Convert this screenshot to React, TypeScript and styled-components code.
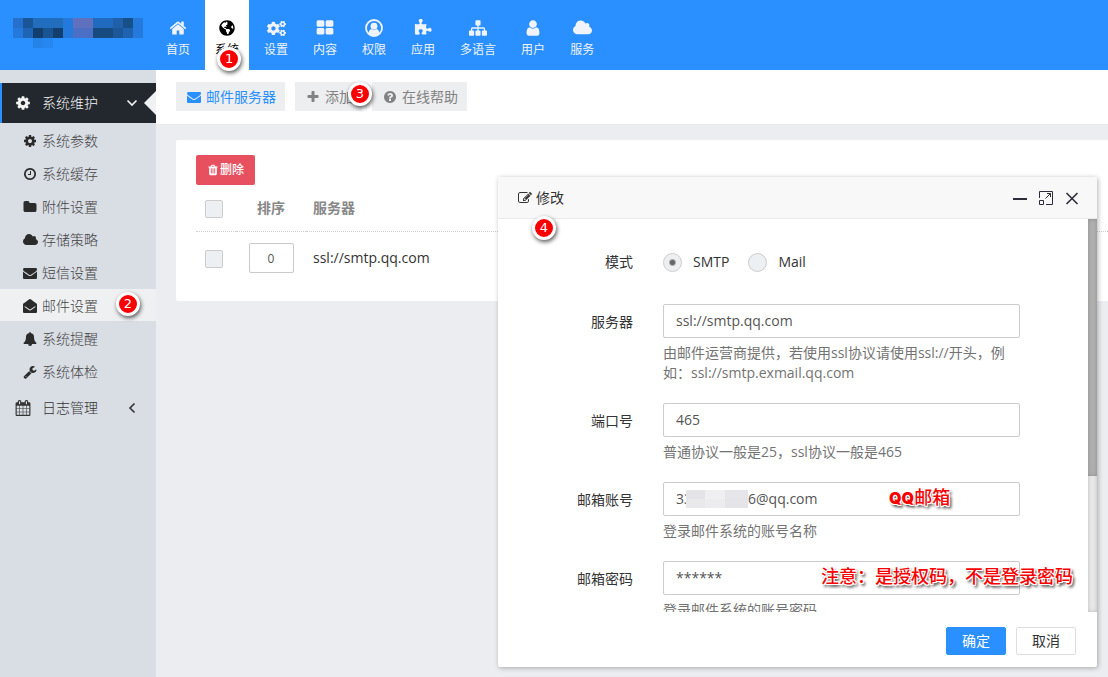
import React from 'react';
import styled, { createGlobalStyle, css } from 'styled-components';
import { FaCogs, FaEnvelopeOpen, FaGlobeAmericas } from 'react-icons/fa';

const GlobalStyle = createGlobalStyle`
  *, *::before, *::after { box-sizing: border-box; }
  html, body { margin: 0; }
  body {
    background: #ecedf0;
    color: #333;
    font: 14px/20px "Open Sans", "Noto Sans CJK SC", sans-serif;
    overflow: hidden;
  }
  a { color: inherit; text-decoration: none; }
  button, input { font: inherit; color: inherit; }
  button { border: 0; padding: 0; background: none; cursor: pointer; }
  ul { margin: 0; padding: 0; list-style: none; }
`;

const DISC =
  'm384 192q0 209-103 385.5t-279.5 279.5-385.5 103-385.5-103-279.5-279.5-103-385.5 103-385.5 279.5-279.5 385.5-103 385.5 103 279.5 279.5 103 385.5z';

const PATHS = {
  home: 'M1472 992v480q0 26-19 45t-45 19h-384v-384h-256v384h-384q-26 0-45-19t-19-45v-480q0-1 .5-3t.5-3l575-474 575 474q1 2 1 6zm223-69l-62 74q-8 9-21 11h-3q-13 0-21-7l-692-577-692 577q-12 8-24 7-13-2-21-11l-62-74q-8-10-7-23.5t11-21.5l719-599q32-26 76-26t76 26l244 204v-195q0-14 9-23t23-9h192q14 0 23 9t9 23v408l219 182q10 8 11 21.5t-7 23.5z',
  envelope:
    'M1792 710v794q0 66-47 113t-113 47h-1472q-66 0-113-47t-47-113v-794q44 49 101 87 362 246 497 345 57 42 92.5 65.5t94.5 48 110 24.5h2q51 0 110-24.5t94.5-48 92.5-65.5q170-123 498-345 57-39 100-87zm0-294q0 79-49 151t-122 123q-376 261-468 325-10 7-42.5 31t-54 38.5-52 32.5-57.5 27-50 9h-2q-23 0-50-9t-57.5-27-52-32.5-54-38.5-42.5-31q-91-64-262-182.5t-205-142.5q-62-42-117-115.5t-55-136.5q0-78 41.5-130t118.5-52h1472q65 0 112.5 47t47.5 113z',
  cog: 'M1152 896q0-106-75-181t-181-75-181 75-75 181 75 181 181 75 181-75 75-181zm512-109v222q0 12-8 23t-20 13l-185 28q-19 54-39 91 35 50 107 138 10 12 10 25t-9 23q-27 37-99 108t-94 71q-12 0-26-9l-138-108q-44 23-91 38-16 136-29 186-7 28-36 28h-222q-14 0-24.5-8.5t-11.5-21.5l-28-184q-49-16-90-37l-141 107q-10 9-25 9-14 0-25-11-126-114-165-168-7-10-7-23 0-12 8-23 15-21 51-66.5t54-70.5q-27-50-41-99l-183-27q-13-2-21-12.5t-8-23.5v-222q0-12 8-23t19-13l186-28q14-46 39-92-40-57-107-138-10-12-10-24 0-10 9-23 26-36 98.5-107.5t94.5-71.5q13 0 26 10l138 107q44-23 91-38 16-136 29-186 7-28 36-28h222q14 0 24.5 8.5t11.5 21.5l28 184q49 16 90 37l142-107q9-9 24-9 13 0 25 10 129 119 165 170 7 8 7 22 0 12-8 23-15 21-51 66.5t-54 70.5q26 50 41 98l183 28q13 2 21 12.5t8 23.5z',
  plus: 'M1600 736v192q0 40-28 68t-68 28h-416v416q0 40-28 68t-68 28h-192q-40 0-68-28t-28-68v-416h-416q-40 0-68-28t-28-68v-192q0-40 28-68t68-28h416v-416q0-40 28-68t68-28h192q40 0 68 28t28 68v416h416q40 0 68 28t28 68z',
  clock: 'M1024 544v448q0 14-9 23t-23 9h-320q-14 0-23-9t-9-23v-64q0-14 9-23t23-9h224v-352q0-14 9-23t23-9h64q14 0 23 9t9 23zm416 352q0-148-73-273t-198-198-273-73-273 73-198 198-73 273 73 273 198 198 273 73 273-73 198-198 73-273zm224 0q0 209-103 385.5t-279.5 279.5-385.5 103-385.5-103-279.5-279.5-103-385.5 103-385.5 279.5-279.5 385.5-103 385.5 103 279.5 279.5 103 385.5z',
  folder:
    'M1728 608v704q0 92-66 158t-158 66h-1216q-92 0-158-66t-66-158v-960q0-92 66-158t158-66h320q92 0 158 66t66 158v32h672q92 0 158 66t66 158z',
  cloud: 'M1920 1152q0 159-112.5 271.5t-271.5 112.5h-1088q-185 0-316.5-131.5t-131.5-316.5q0-132 71-241.5t187-163.5q-2-28-2-43 0-212 150-362t362-150q158 0 286.5 88t187.5 230q70-62 166-62 106 0 181 75t75 181q0 75-41 138 129 30 213 134.5t84 239.5z',
  help:
    'M1024 1376v-192q0-14-9-23t-23-9h-192q-14 0-23 9t-9 23v192q0 14 9 23t23 9h192q14 0 23-9t9-23zm256-672q0-88-55.5-163t-138.5-116-170-41q-243 0-371 213-15 24 8 42l132 100q7 6 19 6 16 0 25-12 53-68 86-92 34-24 86-24 48 0 85.5 26t37.5 59q0 38-20 61t-68 45q-63 28-115.5 86.5t-52.5 125.5v36q0 14 9 23t23 9h192q14 0 23-9t9-23q0-19 21.5-49.5t54.5-49.5q32-18 49-28.5t46-35 44.5-48 28-60.5 12.5-81z' + DISC,
  user: 'M1536 1399q0 109-62.5 187t-150.5 78h-854q-88 0-150.5-78t-62.5-187q0-85 8.5-160.5t31.5-152 58.5-131 94-89 134.5-34.5q131 128 313 128t313-128q76 0 134.5 34.5t94 89 58.5 131 31.5 152 8.5 160.5zm-256-887q0 159-112.5 271.5t-271.5 112.5-271.5-112.5-112.5-271.5 112.5-271.5 271.5-112.5 271.5 112.5 112.5 271.5z',
  trash:
    'M704 1376v-704q0-14-9-23t-23-9h-64q-14 0-23 9t-9 23v704q0 14 9 23t23 9h64q14 0 23-9t9-23zm256 0v-704q0-14-9-23t-23-9h-64q-14 0-23 9t-9 23v704q0 14 9 23t23 9h64q14 0 23-9t9-23zm256 0v-704q0-14-9-23t-23-9h-64q-14 0-23 9t-9 23v704q0 14 9 23t23 9h64q14 0 23-9t9-23zm-544-992h448l-48-117q-7-9-17-11h-317q-10 2-17 11zm928 32v64q0 14-9 23t-23 9h-96v948q0 83-47 143.5t-113 60.5h-832q-66 0-113-58.5t-47-141.5v-952h-96q-14 0-23-9t-9-23v-64q0-14 9-23t23-9h309l70-167q15-37 54-63t79-26h320q40 0 79 26t54 63l70 167h309q14 0 23 9t9 23z',
  edit: 'M888 1184l116-116-152-152-116 116v56h96v96h56zm440-720q-16-16-33 1l-350 350q-17 17-1 33t33-1l350-350q17-17 1-33zm80 594v190q0 119-84.5 203.5t-203.5 84.5h-832q-119 0-203.5-84.5t-84.5-203.5v-832q0-119 84.5-203.5t203.5-84.5h832q63 0 117 25 15 7 18 23 3 17-9 29l-49 49q-14 14-32 8-23-6-45-6h-832q-66 0-113 47t-47 113v832q0 66 47 113t113 47h832q66 0 113-47t47-113v-126q0-13 9-22l64-64q15-15 35-7t20 29zm-96-738l288 288-672 672h-288v-288zm444 132l-92 92-288-288 92-92q28-28 68-28t68 28l152 152q28 28 28 68t-28 68z',
  wrench:
    'M448 1472q0-26-19-45t-45-19-45 19-19 45 19 45 45 19 45-19 19-45zm644-420l-682 682q-37 37-90 37-52 0-91-37l-106-108q-38-36-38-90 0-53 38-91l681-681q39 98 114.5 173.5t173.5 114.5zm634-435q0 39-23 106-47 134-164.5 217.5t-258.5 83.5q-185 0-316.5-131.5t-131.5-316.5 131.5-316.5 316.5-131.5q58 0 121.5 16.5t107.5 46.5q16 11 16 28t-16 28l-293 169v224l193 107q5-3 79-48.5t135.5-81 70.5-35.5q15 0 23.5 10t8.5 25z',
  bell: 'M912 1696q0-16-16-16-59 0-101.5-42.5t-42.5-101.5q0-16-16-16t-16 16q0 73 51.5 124.5t124.5 51.5q16 0 16-16zm816-288q0 52-38 90t-90 38h-448q0 106-75 181t-181 75-181-75-75-181h-448q-52 0-90-38t-38-90q50-42 91-88t85-119.5 74.5-158.5 50-206 19.5-260q0-152 117-282.5t307-158.5q-8-19-8-39 0-40 28-68t68-28 68 28 28 68q0 20-8 39 190 28 307 158.5t117 282.5q0 139 19.5 260t50 206 74.5 158.5 85 119.5 91 88z',
  grid: 'M832 1024v384q0 52-38 90t-90 38h-512q-52 0-90-38t-38-90v-384q0-52 38-90t90-38h512q52 0 90 38t38 90zm0-768v384q0 52-38 90t-90 38h-512q-52 0-90-38t-38-90v-384q0-52 38-90t90-38h512q52 0 90 38t38 90zm896 768v384q0 52-38 90t-90 38h-512q-52 0-90-38t-38-90v-384q0-52 38-90t90-38h512q52 0 90 38t38 90zm0-768v384q0 52-38 90t-90 38h-512q-52 0-90-38t-38-90v-384q0-52 38-90t90-38h512q52 0 90 38t38 90z',
  calendar:
    'M192 1664h288v-288h-288v288zm352 0h320v-288h-320v288zm-352-352h288v-320h-288v320zm352 0h320v-320h-320v320zm-352-384h288v-288h-288v288zm736 736h320v-288h-320v288zm-384-736h320v-288h-320v288zm768 736h288v-288h-288v288zm-384-352h320v-320h-320v320zm-352-864v-288q0-13-9.5-22.5t-22.5-9.5h-64q-13 0-22.5 9.5t-9.5 22.5v288q0 13 9.5 22.5t22.5 9.5h64q13 0 22.5-9.5t9.5-22.5zm736 864h288v-320h-288v320zm-384-384h320v-288h-320v288zm384 0h288v-288h-288v288zm32-480v-288q0-13-9.5-22.5t-22.5-9.5h-64q-13 0-22.5 9.5t-9.5 22.5v288q0 13 9.5 22.5t22.5 9.5h64q13 0 22.5-9.5t9.5-22.5zm384-64v1280q0 52-38 90t-90 38h-1408q-52 0-90-38t-38-90v-1280q0-52 38-90t90-38h128v-96q0-66 47-113t113-47h64q66 0 113 47t47 113v96h384v-96q0-66 47-113t113-47h64q66 0 113 47t47 113v96h128q52 0 90 38t38 90z',
  puzzle:
    'M1755 1083q0 81-44.5 135t-123.5 54q-41 0-77.5-17.5t-59-38-56.5-38-71-17.5q-110 0-110 124 0 39 16 115t15 115v5q-22 0-33 1-34 3-97.5 11.5t-115.5 13.5-98 5q-61 0-103-26.5t-42-83.5q0-37 17.5-71t38-56.5 38-59 17.5-77.5q0-79-54-123.5t-135-44.5q-84 0-143 45.5t-59 127.5q0 43 15 83t33.5 64.5 33.5 53 15 50.5q0 45-46 89-37 35-117 35-95 0-245-24-9-2-27.5-4t-27.5-4l-13-2q-1 0-3-1-2 0-2-1v-1024q2 1 17.5 3.5t34 5 21.5 3.5q150 24 245 24 80 0 117-35 46-44 46-89 0-22-15-50.5t-33.5-53-33.5-64.5-15-83q0-82 59-127.5t144-45.5q80 0 134 44.5t54 123.5q0 41-17.5 77.5t-38 59-38 56.5-17.5 71q0 57 42 83.5t103 26.5q64 0 180-15t163-17v2q-1 2-3.5 17.5t-5 34-3.5 21.5q-24 150-24 245 0 80 35 117 44 46 89 46 22 0 50.5-15t53-33.5 64.5-33.5 83-15q82 0 127.5 59t45.5 143z',
  sitemap:
    'M1792 1248v320q0 40-28 68t-68 28h-320q-40 0-68-28t-28-68v-320q0-40 28-68t68-28h96v-192h-512v192h96q40 0 68 28t28 68v320q0 40-28 68t-68 28h-320q-40 0-68-28t-28-68v-320q0-40 28-68t68-28h96v-192h-512v192h96q40 0 68 28t28 68v320q0 40-28 68t-68 28h-320q-40 0-68-28t-28-68v-320q0-40 28-68t68-28h96v-192q0-52 38-90t90-38h512v-192h-96q-40 0-68-28t-28-68v-320q0-40 28-68t68-28h320q40 0 68 28t28 68v320q0 40-28 68t-68 28h-96v192h512q52 0 90 38t38 90v192h96q40 0 68 28t28 68z',
};

type IconName = keyof typeof PATHS;

function Icon({ name, size }: { name: IconName; size: number }) {
  const wide = name === 'cloud';
  return (
    <svg
      width={wide ? Math.round((size * 15) / 14) : size}
      height={size}
      viewBox={wide ? '0 0 1920 1792' : '0 0 1792 1792'}
      fill="currentColor"
      aria-hidden="true"
    >
      <path d={PATHS[name]} />
    </svg>
  );
}

function UserCircle() {
  return (
    <svg width="18" height="18" viewBox="0 0 18 18" fill="none" aria-hidden="true">
      <circle cx="9" cy="9" r="8" stroke="currentColor" strokeWidth="1.8" />
      <circle cx="9" cy="7.2" r="3.4" fill="currentColor" />
      <path d="M3.4 14.6c.3-2.8 1.500-4.200 3-4.600 1.600 1.200 3.600 1.200 5.200 0 1.500.4 2.700 1.800 3 4.600-3 3-8.200 3-11.200 0z" fill="currentColor" />
    </svg>
  );
}

function Chevron({ dir }: { dir: 'down' | 'left' }) {
  return (
    <svg width="12" height="12" viewBox="0 0 12 12" fill="none" stroke="currentColor" strokeWidth="1.6" aria-hidden="true">
      <path d={dir === 'down' ? 'M1.500 3.500L6 8l4.500-4.500' : 'M8.500 1.500L4 6l4.500 4.500'} />
    </svg>
  );
}

/* ---------- header ---------- */

const Header = styled.header`
  display: flex;
  height: 70px;
  background: #2a90ff;
  color: #f0f3fa;
`;

const Brand = styled.a`
  flex: none;
  width: 156px;
  padding: 18px 0 0 13px;
`;

const TopNav = styled.nav`
  display: flex;
  gap: 5px;
`;

const TopLink = styled.a<{ $active?: boolean }>`
  position: relative;
  display: flex;
  flex-direction: column;
  align-items: center;
  padding: 18px 10px 0;
  font-size: 12px;
  line-height: 24px;
  background: ${p => (p.$active ? '#fff' : 'transparent')};
  color: ${p => (p.$active ? '#000' : 'inherit')};
`;

const TopIcon = styled.span`
  display: flex;
  align-items: center;
  justify-content: center;
  height: 20px;
`;

const Badge = styled.span<{ $x: number; $y: number }>`
  position: absolute;
  left: ${p => p.$x}px;
  top: ${p => p.$y}px;
  z-index: 2;
  width: 24px;
  height: 24px;
  border: 3px solid #fff;
  border-radius: 50%;
  background: #f80000;
  box-shadow: 1px 2px 4px rgba(0, 0, 0, 0.65);
  color: #fff;
  font: 13px/18px "DejaVu Sans", sans-serif;
  text-align: center;
`;

const LOGO_ROWS = [
  ['#2470cc', '#1a5599', '#236dbd', '#216dc0', '#236dbd', '#2479dd', '#5f70bd', '#5f70bd', '#206bbf', '#206bbf', '#1f60a8', '#174f88', '#2479dd'],
  ['#2479dd', '#1f65b5', '#133f70', '#1b5492', '#133f70', '#2479dd', '#4a6fc4', '#4a6fc4', '#174b80', '#174b80', '#1b5799', '#1e62b0', '#2479dd'],
  ['', '', '#2582e6', '#2787f0', '', '', '', '', '', '', '', '', ''],
];

function LogoMosaic() {
  return (
    <svg width="130" height="30" viewBox="0 0 130 30" shapeRendering="crispEdges" role="img" aria-label="logo">
      {LOGO_ROWS.map((row, y) =>
        row.map((c, x) => (c ? <rect key={`${x}-${y}`} x={x * 10} y={y * 10} width="10" height="10" fill={c} /> : null)),
      )}
    </svg>
  );
}

/* ---------- sidebar ---------- */

const Shell = styled.div`
  display: flex;
  min-height: calc(100vh - 70px);
`;

const Sidebar = styled.aside`
  flex: none;
  width: 156px;
  padding-top: 13px;
  background: #d9dde4;
  font-weight: 300;
`;

const Group = styled.button<{ $open?: boolean }>`
  position: relative;
  display: flex;
  align-items: center;
  width: 100%;
  height: 40px;
  padding: 0 18px 0 13px;
  border-left: 2px solid transparent;
  color: #333;
  ${p =>
    p.$open &&
    css`
      border-left-color: #2a90ff;
      background: #22282e;
      color: #f4f4f4;
      &::after {
        content: '';
        position: absolute;
        right: 0;
        top: 8px;
        border: solid transparent;
        border-width: 12px 12px 12px 0;
        border-right-color: #f0f1f3;
      }
    `}
`;

const GroupIcon = styled.span`
  display: flex;
  width: 27px;
`;

const GroupLabel = styled.span`
  flex: 1;
  text-align: left;
`;

const SubMenu = styled.ul`
  display: grid;
  gap: 1px;
  padding: 1px 0;
`;

const SubLink = styled.a<{ $active?: boolean }>`
  position: relative;
  display: flex;
  align-items: center;
  height: 32px;
  padding: 2px 0 0 22px;
  background: ${p => (p.$active ? '#eff0f1' : 'transparent')};
  color: #444;
`;

const SubIcon = styled.span`
  display: flex;
  justify-content: center;
  width: 16px;
  margin-right: 4px;
  color: #2b2b2b;
`;

/* ---------- main ---------- */

const Main = styled.main`
  flex: 1;
  min-width: 0;
`;

const Toolbar = styled.div`
  display: flex;
  gap: 10px;
  padding: 12px 20px 13px;
  border-bottom: 1px solid #e8e9eb;
  background: #fff;
`;

const Tab = styled.a<{ $active?: boolean }>`
  position: relative;
  display: flex;
  align-items: center;
  gap: 5px;
  height: 29px;
  padding: 0 9px 0 11px;
  background: #edeef0;
  color: ${p => (p.$active ? '#2a90ff' : '#828282')};
`;

const Card = styled.section`
  margin: 15px 0 0 20px;
  padding: 15px 0 16px 20px;
  border-radius: 2px 0 0 2px;
  background: #fff;
`;

const DeleteButton = styled.button`
  display: flex;
  align-items: center;
  gap: 1px;
  height: 30px;
  padding: 0 11px;
  border-radius: 2px;
  background: #e7505f;
  color: #fff;
  font-size: 12px;
  font-weight: 500;
`;

const Table = styled.table`
  width: 100%;
  border-collapse: collapse;
  table-layout: fixed;

  th, td { padding: 0; text-align: left; }
  th { height: 46px; border-bottom: 1px dotted #ccced0; color: #888; font-weight: 700; }
  td { height: 54px; }
  th:nth-child(1) { width: 40px; }
  th:nth-child(2) { width: 70px; }
  tr > :nth-child(1) { padding: 2px 0 0 9px; }
  tr > :nth-child(2) { text-align: center; }
  tr > :nth-child(3) { padding-left: 7px; }
`;

const Check = styled.input.attrs({ type: 'checkbox' })`
  appearance: none;
  display: block;
  width: 18px;
  height: 18px;
  margin: 0;
  border: 1px solid #ccc;
  border-radius: 2px;
  background: #edf0f3;
`;

const OrderInput = styled.input`
  width: 45px;
  height: 30px;
  padding: 0;
  border: 1px solid #c8cacd;
  border-radius: 2px;
  background: #fff;
  color: #555;
  font-size: 12px;
  text-align: center;
`;

/* ---------- dialog ---------- */

const Dialog = styled.div`
  position: absolute;
  top: 177px;
  right: 11px;
  display: flex;
  flex-direction: column;
  width: 599px;
  height: 490px;
  border-radius: 2px;
  background: #fff;
  box-shadow: 1px 1px 5px rgba(0, 0, 0, 0.3);
`;

const DialogHead = styled.div`
  display: flex;
  align-items: center;
  height: 42px;
  padding: 0 17px 0 20px;
  border-bottom: 1px solid #eaeaea;
  background: #f8f8f8;
`;

const DialogTitle = styled.h2`
  display: flex;
  flex: 1;
  align-items: center;
  gap: 4px;
  margin: 0;
  font-size: 14px;
  font-weight: 400;
`;

const WindowButtons = styled.div`
  display: flex;
  gap: 10px;
  color: #2d2c3b;
  button { display: flex; width: 16px; height: 16px; }
`;

const DialogMain = styled.div`
  display: flex;
  flex: 1;
  min-height: 0;
`;

const Form = styled.form`
  flex: 1;
  padding: 26px 68px 0 0;
  overflow: hidden;
`;

const ScrollTrack = styled.div`
  width: 9px;
  background: #e9e9e9;
  box-shadow: inset 0 0 4px rgba(0, 0, 0, 0.2);
`;

const ScrollThumb = styled.div`
  height: 257px;
  background: #b0b0b0;
  box-shadow: inset 0 0 4px rgba(0, 0, 0, 0.2);
`;

const FormRow = styled.div`
  display: flex;
  gap: 30px;
  margin-bottom: 20px;
`;

const rowLabel = css`
  flex: none;
  width: 135px;
  text-align: right;
`;

const Label = styled.label`
  ${rowLabel}
  line-height: 36px;
`;

const LabelText = styled.span`
  ${rowLabel}
  line-height: 34px;
`;

const Field = styled.div`
  flex: 1;
  min-width: 0;
`;

const Control = styled.div`
  position: relative;
  display: flex;
`;

const TextInput = styled.input`
  flex: 1;
  min-width: 0;
  height: 34px;
  padding: 0 12px 2px;
  border: 1px solid #ccc;
  border-radius: 2px;
  background: #fff;
  color: #555;
`;

const Help = styled.p`
  margin: 5px 0 0;
  color: #737373;
`;

const Radios = styled.div`
  display: flex;
  gap: 19px;
  height: 39px;
  padding-bottom: 5px;
`;

const RadioLabel = styled.label`
  display: flex;
  align-items: center;
  gap: 11px;
`;

const Radio = styled.input.attrs({ type: 'radio' })`
  appearance: none;
  width: 19px;
  height: 19px;
  margin: 0;
  border: 1px solid #ccc;
  border-radius: 50%;
  background: #edf0f3;
  &:checked { background: radial-gradient(circle, #666 0 2px, #edf0f3 4px); }
`;

const Redaction = styled.svg`
  position: absolute;
  left: 23px;
  top: 8px;
`;

const Note = styled.span<{ $x: number; $y: number }>`
  position: absolute;
  left: ${p => p.$x}px;
  top: ${p => p.$y}px;
  z-index: 2;
  color: #f80000;
  font: 500 18px/20px "Noto Sans CJK SC", sans-serif;
  white-space: nowrap;
  text-shadow: -1px -1px 0 #fff, 1px -1px 0 #fff, -1px 1px 0 #fff, 1px 1px 0 #fff, 0 -1px 0 #fff, 0 1px 0 #fff,
    2px 2px 3px #444, 2px 3px 3px #888;
`;

const NoteLatin = styled.b`
  font: 900 16px/20px Inter, sans-serif;
`;

const DialogFoot = styled.div`
  display: flex;
  justify-content: flex-end;
  gap: 10px;
  padding: 15px 21px 12px;
`;

const FootButton = styled.button<{ $primary?: boolean }>`
  width: 60px;
  height: 28px;
  border: 1px solid ${p => (p.$primary ? '#2a90ff' : '#dedede')};
  border-radius: 2px;
  background: ${p => (p.$primary ? '#2a90ff' : '#fff')};
  color: ${p => (p.$primary ? '#fff' : '#333')};
`;

const NAV: { label: string; icon: React.ReactNode; active?: boolean }[] = [
  { label: '首页', icon: <Icon name="home" size={18} /> },
  { label: '系统', icon: <FaGlobeAmericas size={16} />, active: true },
  { label: '设置', icon: <FaCogs size={19} /> },
  { label: '内容', icon: <Icon name="grid" size={18} /> },
  { label: '权限', icon: <UserCircle /> },
  { label: '应用', icon: <Icon name="puzzle" size={18} /> },
  { label: '多语言', icon: <Icon name="sitemap" size={18} /> },
  { label: '用户', icon: <Icon name="user" size={18} /> },
  { label: '服务', icon: <Icon name="cloud" size={18} /> },
];

const MENU: { label: string; icon: React.ReactNode; active?: boolean }[] = [
  { label: '系统参数', icon: <Icon name="cog" size={14} /> },
  { label: '系统缓存', icon: <Icon name="clock" size={14} /> },
  { label: '附件设置', icon: <Icon name="folder" size={14} /> },
  { label: '存储策略', icon: <Icon name="cloud" size={14} /> },
  { label: '短信设置', icon: <Icon name="envelope" size={14} /> },
  { label: '邮件设置', icon: <FaEnvelopeOpen size={14} />, active: true },
  { label: '系统提醒', icon: <Icon name="bell" size={14} /> },
  { label: '系统体检', icon: <Icon name="wrench" size={14} /> },
];

const REDACTION_CELLS = [
  [0, 0, '#e3e3e8'], [19, 0, '#efeff2'], [39, 0, '#e6e6ea'], [0, 9, '#e9e9ec'], [19, 9, '#ececef'], [39, 9, '#e4e4e9'],
] as const;

const FIGURE_SPACES = '\u2007'.repeat(7);

export default function App() {
  return (
    <>
      <GlobalStyle />
      <Header>
        <Brand href="#"><LogoMosaic /></Brand>
        <TopNav>
          {NAV.map(item => (
            <TopLink key={item.label} href="#" $active={item.active}>
              <TopIcon>{item.icon}</TopIcon>
              {item.label}
              {item.active && <Badge $x={12} $y={47}>1</Badge>}
            </TopLink>
          ))}
        </TopNav>
      </Header>
      <Shell>
        <Sidebar>
          <Group type="button" $open>
            <GroupIcon><Icon name="cog" size={16} /></GroupIcon>
            <GroupLabel>系统维护</GroupLabel>
            <Chevron dir="down" />
          </Group>
          <SubMenu>
            {MENU.map(item => (
              <li key={item.label}>
                <SubLink href="#" $active={item.active}>
                  <SubIcon>{item.icon}</SubIcon>
                  {item.label}
                  {item.active && <Badge $x={116} $y={3}>2</Badge>}
                </SubLink>
              </li>
            ))}
          </SubMenu>
          <Group type="button">
            <GroupIcon><Icon name="calendar" size={16} /></GroupIcon>
            <GroupLabel>日志管理</GroupLabel>
            <Chevron dir="left" />
          </Group>
        </Sidebar>
        <Main>
          <Toolbar>
            <Tab href="#" $active><Icon name="envelope" size={14} />邮件服务器</Tab>
            <Tab href="#"><Icon name="plus" size={14} />添加<Badge $x={53} $y={0}>3</Badge></Tab>
            <Tab href="#"><Icon name="help" size={14} />在线帮助</Tab>
          </Toolbar>
          <Card>
            <DeleteButton type="button"><Icon name="trash" size={12} />删除</DeleteButton>
            <Table>
              <thead>
                <tr>
                  <th><Check aria-label="全选" /></th>
                  <th>排序</th>
                  <th>服务器</th>
                </tr>
              </thead>
              <tbody>
                <tr>
                  <td><Check aria-label="选择" /></td>
                  <td><OrderInput defaultValue="0" aria-label="排序" /></td>
                  <td>ssl://smtp.qq.com</td>
                </tr>
              </tbody>
            </Table>
          </Card>
        </Main>
      </Shell>
      <Dialog role="dialog" aria-labelledby="dialog-title">
        <DialogHead>
          <DialogTitle id="dialog-title"><Icon name="edit" size={14} />修改</DialogTitle>
          <WindowButtons>
            <button type="button" aria-label="最小化">
              <svg width="16" height="16" viewBox="0 0 16 16"><path d="M1 8h14v2H1z" fill="currentColor" /></svg>
            </button>
            <button type="button" aria-label="最大化">
              <svg width="16" height="16" viewBox="0 0 16 16" fill="none" stroke="currentColor">
                <path d="M1.500 8V1.500h13v13H8" />
                <path d="M1.500 10.500h4v4h-4zM7.500 8.500l5-5M9 3.500h3.500V7" />
              </svg>
            </button>
            <button type="button" aria-label="关闭">
              <svg width="16" height="16" viewBox="0 0 16 16" fill="none" stroke="currentColor" strokeWidth="1.6">
                <path d="M2.500 3l11 11M13.500 3l-11 11" />
              </svg>
            </button>
          </WindowButtons>
        </DialogHead>
        <Badge $x={34} $y={39}>4</Badge>
        <DialogMain>
          <Form>
            <FormRow role="radiogroup" aria-labelledby="mode-label">
              <LabelText id="mode-label">模式</LabelText>
              <Radios>
                <RadioLabel><Radio name="mode" defaultChecked />SMTP</RadioLabel>
                <RadioLabel><Radio name="mode" />Mail</RadioLabel>
              </Radios>
            </FormRow>
            <FormRow>
              <Label htmlFor="host">服务器</Label>
              <Field>
                <Control><TextInput id="host" defaultValue="ssl://smtp.qq.com" /></Control>
                <Help>由邮件运营商提供，若使用ssl协议请使用ssl://开头，例如：ssl://smtp.exmail.qq.com</Help>
              </Field>
            </FormRow>
            <FormRow>
              <Label htmlFor="port">端口号</Label>
              <Field>
                <Control><TextInput id="port" defaultValue="465" /></Control>
                <Help>普通协议一般是25，ssl协议一般是465</Help>
              </Field>
            </FormRow>
            <FormRow>
              <Label htmlFor="account">邮箱账号</Label>
              <Field>
                <Control>
                  <TextInput id="account" defaultValue={`33${FIGURE_SPACES}6@qq.com`} />
                  <Redaction width="62" height="18" viewBox="0 0 62 18" shapeRendering="crispEdges" aria-hidden="true">
                    {REDACTION_CELLS.map(([x, y, fill]) => (
                      <rect key={`${x}-${y}`} x={x} y={y} width="23" height="9" fill={fill} />
                    ))}
                  </Redaction>
                  <Note $x={226} $y={4}><NoteLatin>QQ</NoteLatin>邮箱</Note>
                </Control>
                <Help>登录邮件系统的账号名称</Help>
              </Field>
            </FormRow>
            <FormRow>
              <Label htmlFor="password">邮箱密码</Label>
              <Field>
                <Control>
                  <TextInput id="password" defaultValue="******" />
                  <Note $x={158} $y={4}>注意：是授权码，不是登录密码</Note>
                </Control>
                <Help>登录邮件系统的账号密码</Help>
              </Field>
            </FormRow>
          </Form>
          <ScrollTrack><ScrollThumb /></ScrollTrack>
        </DialogMain>
        <DialogFoot>
          <FootButton type="button" $primary>确定</FootButton>
          <FootButton type="button">取消</FootButton>
        </DialogFoot>
      </Dialog>
    </>
  );
}
